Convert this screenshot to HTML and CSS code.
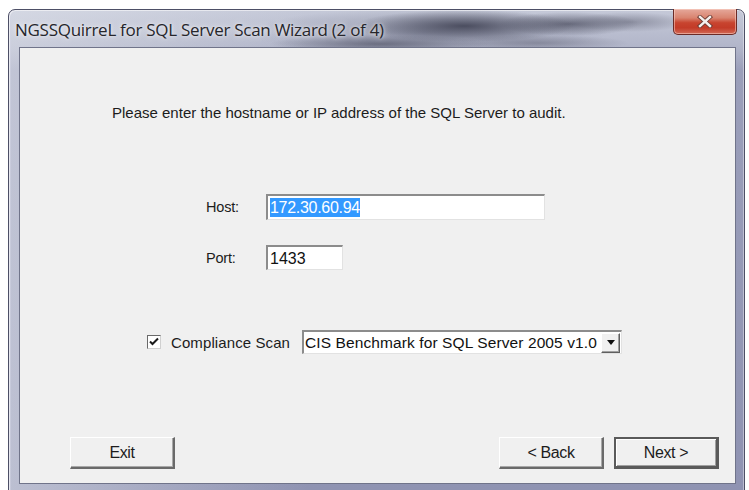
FILE: index.html
```html
<!DOCTYPE html>
<html>
<head>
<meta charset="utf-8">
<title>NGSSQuirreL for SQL Server Scan Wizard</title>
<link rel="stylesheet" href="styles.css">
</head>
<body>
<div class="window">
  <div class="titlebar">
    <span class="title">NGSSQuirreL for SQL Server Scan Wizard (2 of 4)</span>
    <div class="close-btn">
      <svg width="16" height="13" viewBox="0 0 16 13">
        <path d="M3 2 L13 11 M13 2 L3 11" stroke="#6a3a32" stroke-width="4.2" stroke-linecap="square"/>
        <path d="M3 2 L13 11 M13 2 L3 11" stroke="#f4f0ee" stroke-width="2.4" stroke-linecap="square"/>
      </svg>
    </div>
  </div>
  <div class="client">
    <p class="intro">Please enter the hostname or IP address of the SQL Server to audit.</p>

    <div class="form">
      <label class="label">Host:</label>
      <div class="field host"><span class="selected">172.30.60.94</span></div>
      <label class="label">Port:</label>
      <div class="field port">1433</div>
    </div>

    <div class="compliance">
      <div class="check">
        <svg width="14" height="14" viewBox="0 0 14 14">
          <path d="M3 6.5 L5.5 9 L11 3.5" fill="none" stroke="#1a1a1a" stroke-width="2"/>
        </svg>
      </div>
      <span class="check-label">Compliance Scan</span>
      <div class="select">
        <span class="select-text">CIS Benchmark for SQL Server 2005 v1.0</span>
        <div class="drop-btn">
          <svg width="8" height="5" viewBox="0 0 8 5"><path d="M0 0 H8 L4 5 Z" fill="#111"/></svg>
        </div>
      </div>
    </div>

    <div class="buttons">
      <button class="btn">Exit</button>
      <div class="spacer"></div>
      <button class="btn">&lt; Back</button>
      <button class="btn default">Next &gt;</button>
    </div>
  </div>
</div>
</body>
</html>
```
FILE: styles.css
```css
html, body {
  margin: 0;
  padding: 0;
  background: #ffffff;
}

body {
  width: 749px;
  height: 490px;
  overflow: hidden;
  font-family: "Liberation Sans", Arial, sans-serif;
}

/* Aero-style glass frame with a blurred backdrop behind the caption */
.window {
  margin: 9px 0 0 8px;
  width: 737px;
  height: 483px;
  box-sizing: border-box;
  border: 1px solid #4d4f66;
  border-radius: 7px 7px 0 0;
  background:
    radial-gradient(ellipse 110px 16px at 455px 16px, rgba(60, 62, 80, 0.85), rgba(60, 62, 80, 0) 100%),
    radial-gradient(ellipse 70px 12px at 560px 14px, rgba(70, 72, 90, 0.7), rgba(70, 72, 90, 0) 100%),
    radial-gradient(ellipse 60px 10px at 620px 12px, rgba(90, 92, 110, 0.5), rgba(90, 92, 110, 0) 100%),
    radial-gradient(ellipse 110px 9px at 370px 34px, rgba(70, 72, 90, 0.6), rgba(70, 72, 90, 0) 100%),
    radial-gradient(ellipse 90px 8px at 530px 33px, rgba(90, 92, 110, 0.45), rgba(90, 92, 110, 0) 100%),
    radial-gradient(ellipse 180px 24px at 420px 22px, rgba(110, 114, 135, 0.5), rgba(110, 114, 135, 0) 100%),
    linear-gradient(to right, rgba(225, 228, 236, 0.55) 0px, rgba(225, 228, 236, 0) 300px),
    linear-gradient(to bottom, #c5c9d8 0px, #b1b5c9 38px, #9b9fba 60px, #8f93b2 100%);
  display: flex;
  flex-direction: column;
  padding: 0 8px 7px 10px;
  box-shadow: inset 1px 1px 0 rgba(255, 255, 255, 0.55), inset -1px 0 0 rgba(255, 255, 255, 0.4), inset 2px 0 0 rgba(210, 212, 228, 0.5);
}

.titlebar {
  height: 37px;
  display: flex;
  align-items: flex-start;
  justify-content: space-between;
  flex-shrink: 0;
}

.title {
  font-family: "Open Sans", "Noto Sans", sans-serif;
  font-size: 17px;
  letter-spacing: -0.28px;
  color: #26262b;
  margin: 8px 0 0 -4px;
  text-shadow: 0 0 7px rgba(255, 255, 255, 0.85), 0 0 3px rgba(255, 255, 255, 0.6);
}

.close-btn {
  width: 64px;
  height: 26px;
  margin-top: -1px;
  margin-right: -1px;
  box-sizing: border-box;
  border: 1px solid #6b2b26;
  border-top: none;
  border-radius: 0 0 5px 5px;
  background: linear-gradient(to bottom, #e5a89b 0%, #d98470 35%, #c8442f 55%, #c33b28 75%, #d26a55 100%);
  box-shadow: inset 0 0 0 1px rgba(255, 220, 210, 0.5);
  display: flex;
  align-items: center;
  justify-content: center;
}

.client {
  flex: 1;
  background: #f0f0f0;
  border: 1px solid #70748a;
  display: flex;
  flex-direction: column;
  font-size: 14px;
  color: #1c1c1c;
}

.intro {
  margin: 57px 0 0 92px;
  font-size: 15px;
  letter-spacing: 0;
  line-height: 16px;
}

.form {
  margin: 73px 0 0 186px;
  display: grid;
  grid-template-columns: 60px auto;
  row-gap: 25px;
  align-items: center;
}

.label {
  font-size: 14.5px;
  letter-spacing: -0.2px;
}

.field {
  box-sizing: border-box;
  background: #ffffff;
  border-top: 2px solid #8c8c8c;
  border-left: 2px solid #8c8c8c;
  border-right: 1px solid #e2e2e2;
  border-bottom: 1px solid #e2e2e2;
  font-size: 16px;
  padding: 2px 0 0 2px;
  line-height: 19px;
}

.field.host {
  width: 279px;
  height: 26px;
}

.field.port {
  width: 77px;
  height: 25px;
  color: #111;
}

.selected {
  background: #3399ff;
  color: #ffffff;
  padding: 1px 0;
  letter-spacing: -0.3px;
}

.compliance {
  margin: 60px 0 0 127px;
  display: flex;
  align-items: center;
}

.check {
  width: 14px;
  height: 14px;
  box-sizing: border-box;
  background: #ffffff;
  border-top: 1px solid #6a6a6a;
  border-left: 1px solid #6a6a6a;
  border-right: 1px solid #d0d0d0;
  border-bottom: 1px solid #d0d0d0;
  display: flex;
  align-items: center;
  justify-content: center;
}

.check svg {
  margin: -1px;
}

.check-label {
  margin-left: 10px;
  font-size: 15px;
  letter-spacing: 0.1px;
}

.select {
  margin-left: 12px;
  width: 320px;
  height: 24px;
  box-sizing: border-box;
  background: #ffffff;
  border-top: 2px solid #8c8c8c;
  border-left: 2px solid #8c8c8c;
  border-right: 1px solid #e2e2e2;
  border-bottom: 1px solid #e2e2e2;
  display: flex;
  align-items: center;
  justify-content: space-between;
}

.select-text {
  font-size: 15.5px;
  padding-left: 1px;
  letter-spacing: 0.1px;
  color: #111;
}

.drop-btn {
  width: 19px;
  height: 20px;
  box-sizing: border-box;
  background: #f0f0f0;
  border-top: 1px solid #ffffff;
  border-left: 1px solid #ffffff;
  border-right: 1px solid #5f5f5f;
  border-bottom: 1px solid #5f5f5f;
  box-shadow: inset -1px -1px 0 #a0a0a0;
  display: flex;
  align-items: center;
  justify-content: center;
  margin-right: 1px;
}

.buttons {
  margin: 83px 0 0 50px;
  padding-right: 16px;
  display: flex;
  align-items: center;
}

.spacer {
  flex: 1;
}

.btn {
  width: 105px;
  height: 32px;
  margin: 0;
  padding: 0;
  box-sizing: border-box;
  background: #f0f0f0;
  font-family: "Liberation Sans", Arial, sans-serif;
  font-size: 16px;
  letter-spacing: -0.4px;
  color: #1c1c1c;
  border-top: 1px solid #ffffff;
  border-left: 1px solid #ffffff;
  border-right: 2px solid #6a6a6a;
  border-bottom: 2px solid #6a6a6a;
  box-shadow: inset -1px -1px 0 #a8a8a8;
}

.btn + .btn {
  margin-left: 10px;
}

.btn.default {
  border: 2px solid #5a5a5a;
  border-right-width: 3px;
  border-bottom-width: 3px;
  box-shadow: inset 1px 1px 0 #ffffff, inset -1px -1px 0 #a0a0a0;
}
```
